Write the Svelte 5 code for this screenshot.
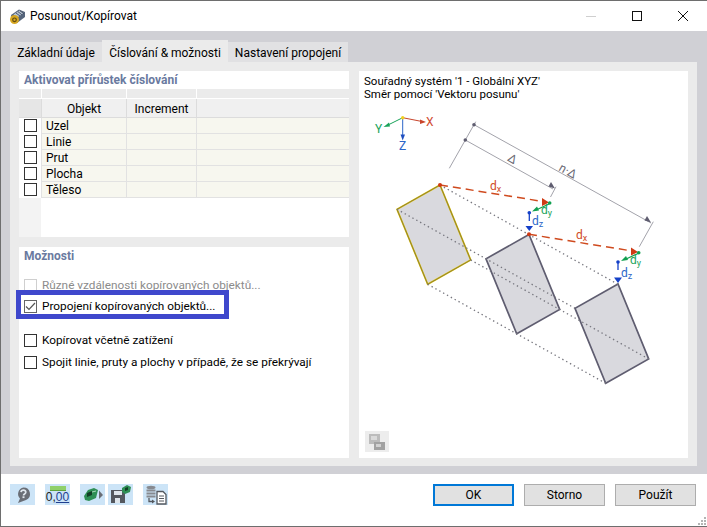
<script>
    const tabs = [
        { label: "Základní údaje", active: false },
        { label: "Číslování & možnosti", active: true },
        { label: "Nastavení propojení", active: false },
    ];
    const objects = ["Uzel", "Linie", "Prut", "Plocha", "Těleso"];

    // corners of the first plate, the other two are shifted copies
    const plate = [[440, 185], [397, 209.3], [427.7, 284.3], [470.7, 260]];
    const shift = [[0, 0], [89, 49.5], [178, 99]];
    const strokes = ["#e2c400", "#5f5d70", "#5f5d70"];

    const moved = (s) => plate.map(([x, y]) => [x + s[0], y + s[1]]);
    const pts = (list) => list.map((p) => p.join(",")).join(" ");
</script>

<div class="window">
    <header class="titlebar">
        <svg class="appicon" width="17" height="17" viewBox="0 0 17 17">
            <path d="M2 7L10 1.500L16 4L16 9L8 15L3 13Z" fill="#56657c" />
            <path d="M4.500 6.500L10.500 2.500L14.500 5L8.500 9.500Z" fill="#b8c4d4" />
            <path d="M7 5L11 8M9 3.700L13 6.800M11 2.800L15 5.800" stroke="#3f4c60" stroke-width="0.9" />
            <circle cx="5.500" cy="11.500" r="4.500" fill="#d8a822" />
            <circle cx="5.500" cy="11.800" r="1.800" fill="none" stroke="#5f4a10" stroke-width="1.200" />
        </svg>
        <span>Posunout/Kopírovat</span>
        <div class="controls">
            <svg width="10" height="10" viewBox="0 0 10 10"><path d="M0 5.500H10" stroke="#cfcfcf" /></svg>
            <svg width="10" height="10" viewBox="0 0 10 10"><rect x="0.500" y="0.500" width="9" height="9" fill="none" stroke="#111" /></svg>
            <svg width="10" height="10" viewBox="0 0 10 10"><path d="M0 0L10 10M10 0L0 10" stroke="#111" /></svg>
        </div>
    </header>

    <main class="body">
        <nav class="tabs">
            {#each tabs as tab}
                <div class="tab" class:active={tab.active}>{tab.label}</div>
            {/each}
        </nav>

        <div class="page">
            <div class="left">
                <section class="panel top">
                    <h3>Aktivovat přírůstek číslování</h3>
                    <div class="table">
                        <div class="row band">
                            <div></div><div></div><div></div><div></div>
                        </div>
                        <div class="row head">
                            <div class="c0"></div><div>Objekt</div><div>Increment</div><div></div>
                        </div>
                        {#each objects as name}
                            <div class="row item">
                                <div class="c0"><span class="box"></span></div>
                                <div class="name">{name}</div>
                                <div></div>
                                <div></div>
                            </div>
                        {/each}
                        <div class="tail"></div>
                    </div>
                </section>

                <section class="panel bottom">
                    <h3>Možnosti</h3>
                    <label class="opt disabled"><span class="box"></span>Různé vzdálenosti kopírovaných objektů...</label>
                    <label class="opt marked">
                        <span class="box">
                            <svg width="11" height="11" viewBox="0 0 11 11"><path d="M1 5.500L4 8.500L10 2" fill="none" stroke="#555" stroke-width="1.200" /></svg>
                        </span>
                        Propojení kopírovaných objektů...
                    </label>
                    <label class="opt third"><span class="box"></span>Kopírovat včetně zatížení</label>
                    <label class="opt fourth"><span class="box"></span>Spojit linie, pruty a plochy v případě, že se překrývají</label>
                </section>
            </div>

            <section class="panel right">
                <p class="info">Souřadný systém '1 - Globální XYZ'<br />Směr pomocí 'Vektoru posunu'</p>

                <svg class="diagram" width="329" height="332" viewBox="359 102 329 332">
                    <!-- axes -->
                    <path d="M402.700 117.700L422 121.500" stroke="#c8452c" />
                    <path d="M426 122L420 119.500V124Z" fill="#c8452c" />
                    <path d="M402.700 117.700L387 125.500" stroke="#19a35a" />
                    <path d="M383.500 127L389 122.500L390 126.500Z" fill="#19a35a" />
                    <path d="M402.700 117.700V136" stroke="#2c66c8" />
                    <path d="M402.700 140.500L400.500 134.500H405Z" fill="#1f4fc0" />
                    <circle cx="402.700" cy="117.700" r="1.700" fill="#f0d020" />
                    <text x="426" y="126" class="axis" fill="#d0492e">X</text>
                    <text x="375" y="133" class="axis" fill="#19a35a">Y</text>
                    <text x="399" y="150" class="axis" fill="#2c66c8">Z</text>

                    <!-- dimension lines -->
                    <path d="M475.700 121.700L449.300 168.300M465.300 140L553 189M474 124.700L651 223M556 186.700L550.500 197M653.300 221.700L639.300 246.700" stroke="#a3a3ab" fill="none" />
                    <circle cx="474" cy="124.700" r="1.800" fill="#5f5d70" />
                    <circle cx="465.300" cy="140" r="1.800" fill="#5f5d70" />
                    <path d="M555 188.500L548.500 186.500L551 182Z" fill="#5f5d70" />
                    <path d="M651 222.500L644.500 220.500L647 216Z" fill="#5f5d70" />
                    <text x="512.500" y="163" class="dim" transform="rotate(30 512.500 159)">Δ</text>
                    <text x="568" y="175" class="dim" transform="rotate(30 568 171)">n·Δ</text>

                    <!-- plates -->
                    {#each shift as s, i}
                        <polygon points={pts(moved(s))} fill="#d9d9de" stroke={strokes[i]} stroke-width="1.700" />
                    {/each}
                    <polygon points={pts(plate)} fill="none" stroke="#6b6550" stroke-width="0.700" />

                    <!-- dotted projections between the corners -->
                    <path d="M440 185L618 284.300M397 209.300L575 308.300M427.700 284.300L605.700 383.300M470.700 260L648.700 359" stroke="#77777f" stroke-width="1.300" stroke-dasharray="1.400 3" fill="none" />

                    <!-- first displacement -->
                    <path d="M440 185L540 201" stroke="#cf4a1e" stroke-width="1.500" stroke-dasharray="8 5" />
                    <circle cx="440" cy="185" r="2" fill="#cf3a14" />
                    <path d="M549 202.500L542 198V206Z" fill="#cf3a14" />
                    <circle cx="549.700" cy="203" r="1.800" fill="#10a050" />
                    <path d="M549 204L536 210" stroke="#10a050" stroke-width="1.300" />
                    <path d="M532 211.500L537 206.500L539 210.500Z" fill="#10a050" />
                    <circle cx="529.300" cy="212.700" r="1.800" fill="#1440c8" />
                    <path d="M529.300 213V221" stroke="#1440c8" stroke-width="1.300" />
                    <path d="M529.300 231L525.500 226H533Z" fill="#1440c8" />
                    <text x="490" y="190" class="sym" fill="#cf4a1e">d<tspan class="sub" dy="2">x</tspan></text>
                    <text x="541" y="214" class="sym" fill="#19a35a">d<tspan class="sub" dy="2">y</tspan></text>
                    <text x="532" y="225" class="sym" fill="#2c66c8">d<tspan class="sub" dy="2">z</tspan></text>

                    <!-- second displacement -->
                    <path d="M529 234.300L629 250.500" stroke="#cf4a1e" stroke-width="1.500" stroke-dasharray="8 5" />
                    <circle cx="529" cy="234.300" r="2" fill="#cf3a14" />
                    <path d="M638 252L631 247.500V255.500Z" fill="#cf3a14" />
                    <circle cx="638.700" cy="252.700" r="1.800" fill="#10a050" />
                    <path d="M638 253.500L625 259.500" stroke="#10a050" stroke-width="1.300" />
                    <path d="M621 261L626 256L628 260Z" fill="#10a050" />
                    <circle cx="618" cy="262" r="1.800" fill="#1440c8" />
                    <path d="M618 262V270" stroke="#1440c8" stroke-width="1.300" />
                    <path d="M618 283L614 277.500H622Z" fill="#1440c8" />
                    <text x="576" y="239" class="sym" fill="#cf4a1e">d<tspan class="sub" dy="2">x</tspan></text>
                    <text x="630" y="264" class="sym" fill="#19a35a">d<tspan class="sub" dy="2">y</tspan></text>
                    <text x="621" y="277" class="sym" fill="#2c66c8">d<tspan class="sub" dy="2">z</tspan></text>
                </svg>

                <button class="viewbtn" aria-label="Zobrazení">
                    <svg width="18" height="18" viewBox="0 0 18 18">
                        <rect x="1" y="1" width="11" height="10" fill="#bcbcbc" />
                        <rect x="3" y="3" width="6" height="4" fill="#dadada" />
                        <rect x="6" y="9" width="11" height="8" fill="#a2a2a2" />
                        <rect x="8" y="11" width="5" height="3" fill="#d2d2d2" />
                    </svg>
                </button>
            </section>
        </div>
    </main>

    <footer class="footer">
        <div class="tools">
            <button class="tool" aria-label="Nápověda">
                <svg width="20" height="20" viewBox="0 0 20 20">
                    <path d="M10.500 2.500a6.500 6.500 0 0 1 2.500 12.500L5 18l2-4.500A6.500 6.500 0 0 1 10.500 2.500Z" fill="#6a6e76" />
                    <path d="M8 7.200c.3-2.800 5-2.600 4.800.1-.1 1.800-2.300 1.700-2.300 3.200" fill="none" stroke="#dfe6ec" stroke-width="1.700" />
                    <rect x="9.500" y="11.300" width="2" height="1.800" fill="#dfe6ec" />
                </svg>
            </button>
            <button class="tool units" aria-label="Jednotky">
                <span class="ruler"></span>
                <span class="num">0,<u>00</u></span>
            </button>
            <button class="tool gap" aria-label="Model">
                <svg width="20" height="16" viewBox="0 0 20 16">
                    <path d="M1 9L5 3L11 1L15 3L13 11L6 14L2 13Z" fill="#2f8f55" />
                    <path d="M4 6L9 4V8L4 10Z" fill="#123f26" />
                    <path d="M9 5L13 4" stroke="#a9d9b9" />
                    <path d="M16 3.500L20 8L16 12Z" fill="#6a6e76" />
                </svg>
            </button>
            <button class="tool near" aria-label="Uložit">
                <svg width="22" height="19" viewBox="0 0 22 19">
                    <path d="M1 5H15V18H1Z" fill="#54585f" />
                    <rect x="4" y="6" width="8" height="4" fill="#dfe6ec" />
                    <rect x="5" y="13" width="5" height="5" fill="#dfe6ec" />
                    <path d="M12 3L17 0L21 2L20 7L15 9L12 7Z" fill="#2f8f55" />
                    <path d="M15 3L18 2V5L15 6Z" fill="#123f26" />
                </svg>
            </button>
            <button class="tool gap" aria-label="Kopírovat">
                <svg width="22" height="20" viewBox="0 0 22 20">
                    <ellipse cx="6" cy="2.500" rx="4.500" ry="1.800" fill="#878a90" />
                    <path d="M1.500 5.500h9M1.500 8.500h9M1.500 11.500h9" stroke="#878a90" stroke-width="2" />
                    <path d="M4 13v3.500h4" fill="none" stroke="#54585f" stroke-width="1.300" />
                    <path d="M7 14.500l3 2-3 2Z" fill="#54585f" />
                    <path d="M12 6.500h6l3 3v9.500h-9Z" fill="#fff" stroke="#54585f" stroke-width="1.300" />
                    <path d="M14 11h5M14 13.500h5M14 16h5" stroke="#54585f" />
                </svg>
            </button>
        </div>
        <div class="actions">
            <button class="btn primary">OK</button>
            <button class="btn">Storno</button>
            <button class="btn">Použít</button>
        </div>
        <svg class="grip" width="10" height="10" viewBox="0 0 10 10">
            <path d="M7 1h2v2h-2zM4 4h2v2h-2zM7 4h2v2h-2zM1 7h2v2h-2zM4 7h2v2h-2zM7 7h2v2h-2z" fill="#b4b4b4" />
        </svg>
    </footer>
</div>

<style>
    :global(body) {
        margin: 0;
        background: #fff;
    }

    .window {
        width: 707px;
        height: 527px;
        box-sizing: border-box;
        border: 1px solid #6e6e6e;
        border-right: 0;
        display: flex;
        flex-direction: column;
        font-family: Roboto, "Open Sans", sans-serif;
        font-size: 12px;
        color: #000;
        overflow: hidden;
    }

    .titlebar {
        height: 30px;
        flex: none;
        display: flex;
        align-items: center;
        padding-left: 8px;
        background: #fff;
    }

    .appicon {
        margin-right: 4px;
    }

    .controls {
        margin-left: auto;
        display: flex;
        gap: 36px;
        padding-right: 19px;
    }

    .body {
        flex: 1;
        background: #d0d0d5;
        padding: 9px 10px 8px 9px;
        display: flex;
        flex-direction: column;
    }

    .tabs {
        display: grid;
        grid-template-columns: 92px 126px 120px;
        align-items: end;
        height: 22px;
        flex: none;
    }

    .tab {
        height: 20px;
        line-height: 22px;
        text-align: center;
        background: #e1e1e3;
    }

    .tab.active {
        height: 22px;
        line-height: 26px;
        background: #ebebeb;
    }

    .page {
        flex: 1;
        background: #ebebeb;
        padding: 9px 9px 8px;
        display: flex;
        gap: 10px;
    }

    .left {
        width: 330px;
        display: flex;
        flex-direction: column;
        gap: 10px;
    }

    .panel {
        background: #fff;
        position: relative;
    }

    h3 {
        margin: 0;
        font-size: 12px;
        font-weight: 700;
        color: #6a7aa0;
    }

    .top {
        height: 166px;
        flex: none;
    }

    .top h3 {
        padding: 1px 5px 0;
        height: 17px;
        line-height: 17px;
    }

    .table {
        height: 148px;
        display: flex;
        flex-direction: column;
    }

    .row {
        display: grid;
        grid-template-columns: 22px 84px 69px 1fr;
        column-gap: 1px;
    }

    .band {
        height: 9px;
        margin-bottom: 1px;
    }

    .band div {
        background: #ebebeb;
    }

    .head {
        height: 18px;
        grid-template-rows: 18px;
        line-height: 20px;
        padding-bottom: 1px;
        text-align: center;
        background: #dcdcdc;
    }

    .head div {
        background: #f0f0f0;
    }

    .head .c0 {
        background: #e6e6e6;
    }

    .item {
        height: 15px;
        grid-template-rows: 15px;
        padding-bottom: 1px;
        background: #e2e2e2;
    }

    .item div {
        background: #f7f7ef;
    }

    .item .c0 {
        margin-bottom: -1px;
        padding-top: 1px;
        background: #fff;
        display: flex;
        align-items: flex-start;
        justify-content: center;
    }

    .item .name {
        padding-left: 4px;
        height: 15px;
        line-height: 16px;
    }

    .tail {
        flex: 1;
        width: 22px;
        background: #f3f3f3;
    }

    .box {
        width: 11px;
        height: 11px;
        flex: none;
        border: 1px solid #333;
        background: #fff;
        display: inline-flex;
        align-items: center;
        justify-content: center;
    }

    .bottom {
        flex: 1;
    }

    .bottom h3 {
        padding-top: 1px;
        padding-left: 5px;
        height: 17px;
        line-height: 17px;
    }

    .opt {
        display: flex;
        align-items: center;
        gap: 5px;
        height: 20px;
        padding-left: 5px;
        font-size: 11.8px;
    }

    .disabled {
        margin-top: 10px;
        color: #8b8b8b;
    }

    .disabled .box {
        border-color: #cfcfcf;
    }

    .marked {
        margin-top: 1px;
    }

    .marked .box {
        border-color: #666;
    }

    .marked::after {
        content: "";
        position: absolute;
        left: -3px;
        top: 43px;
        width: 203px;
        height: 19px;
        border: 5px solid #3f48cc;
    }

    .third {
        margin-top: 14px;
    }

    .fourth {
        margin-top: 2px;
    }

    .right {
        flex: 1;
    }

    .info {
        margin: 0;
        padding: 4px 5px 0;
        height: 27px;
        line-height: 13px;
        font-size: 11.5px;
    }

    .diagram {
        display: block;
    }

    .axis {
        font-size: 12px;
    }

    .dim {
        font-size: 12px;
        fill: #6b6b75;
        text-anchor: middle;
    }

    .sym {
        font-size: 12px;
    }

    .sub {
        font-size: 9px;
    }

    .viewbtn {
        position: absolute;
        left: 6px;
        bottom: 6px;
        width: 24px;
        height: 21px;
        padding: 0;
        border: 0;
        background: #ededed;
        display: flex;
        align-items: center;
        justify-content: center;
    }

    .footer {
        height: 42px;
        flex: none;
        background: #fff;
        position: relative;
        display: flex;
        justify-content: space-between;
        align-items: flex-start;
        padding: 10px 11px 0 9px;
    }

    .tools {
        display: flex;
    }

    .tool {
        width: 25px;
        height: 21px;
        padding: 0;
        border: 0;
        background: #cce4f7;
        display: flex;
        align-items: center;
        justify-content: center;
    }

    .tool.units {
        margin-left: 10px;
        flex-direction: column;
    }

    .tool.gap {
        margin-left: 10px;
    }

    .tool.near {
        margin-left: 3px;
    }

    .ruler {
        width: 16px;
        height: 4px;
        background: #8fd06a;
        border-bottom: 1px solid #5ea23c;
    }

    .num {
        font-family: "Liberation Sans", sans-serif;
        font-size: 12px;
        line-height: 13px;
        color: #222;
    }

    .num u {
        color: #1f3f8f;
    }

    .actions {
        display: flex;
        gap: 10px;
    }

    .btn {
        width: 81px;
        height: 22px;
        padding: 0;
        box-sizing: border-box;
        border: 1px solid #adadad;
        background: #e1e1e1;
        font: inherit;
        color: #000;
    }

    .btn.primary {
        border: 2px solid #0078d7;
    }

    .grip {
        position: absolute;
        right: 0;
        bottom: 0;
    }
</style>
